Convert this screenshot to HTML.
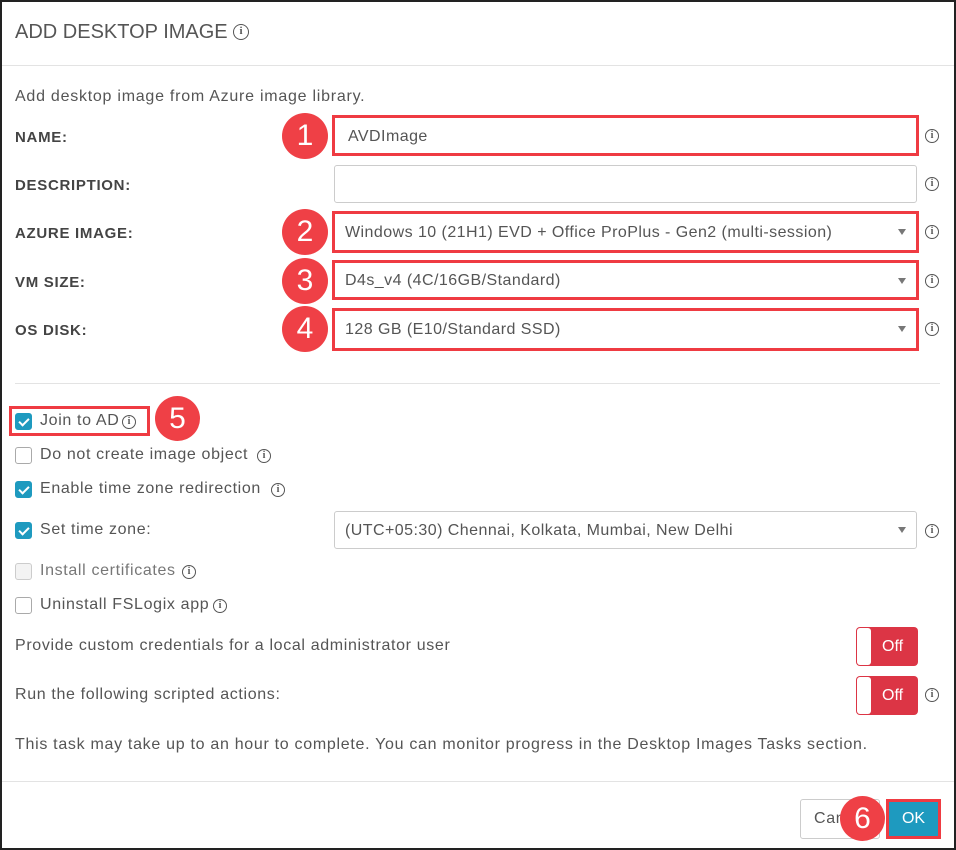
<!DOCTYPE html>
<html><head><style>
*{box-sizing:border-box;margin:0;padding:0}
body{width:956px;height:850px;background:#fff;font-family:"Liberation Sans",sans-serif;color:#555;position:relative;overflow:hidden;letter-spacing:0.65px}
.frame{position:absolute;left:0;top:0;width:956px;height:850px;border:2px solid #222}
.abs{position:absolute}
.lbl{position:absolute;left:15px;font-weight:bold;font-size:15px;color:#444;letter-spacing:0.7px}
.inp{position:absolute;left:334px;width:583px;height:38px;border:1px solid #ccc;border-radius:3px;font-size:16px;color:#555;padding:0 10px;line-height:38px;letter-spacing:0.45px}
.red{border:3px solid #ef3b42;border-radius:0}
.arrow{position:absolute;right:10px;top:15px;width:0;height:0;border-left:4px solid transparent;border-right:4px solid transparent;border-top:6px solid #777}
.num{position:absolute;width:46px;height:46px;border-radius:50%;background:#ef4046;color:#fff;font-size:30px;text-align:center;line-height:46px;letter-spacing:0}
.info{position:absolute;width:14px;height:14px;border:1.5px solid #555;border-radius:50%;font-size:10px;font-weight:bold;text-align:center;line-height:11px;color:#555;font-family:"Liberation Serif",serif;letter-spacing:0}
.cb{position:absolute;left:15px;width:17px;height:17px;border:1px solid #aaa;border-radius:3px;background:#fff}
.cb.on{background:#1e9abf;border-color:#1e9abf}
.cb.on::after{content:"";position:absolute;left:5px;top:2px;width:4px;height:8px;border:solid #fff;border-width:0 2px 2px 0;transform:rotate(45deg)}
.ct{position:absolute;left:40px;font-size:16px;color:#555}
.tog{position:absolute;left:856px;width:62px;height:39px;background:#dc3545;border-radius:4px;color:#fff;font-size:16px;line-height:39px;padding-left:26px;letter-spacing:0}
.tog::before{content:"";position:absolute;left:1px;top:1px;width:14px;height:37px;background:#fff;border-radius:3px}
</style></head><body>
<div class="frame"></div>
<div class="abs" style="left:15px;top:21px;font-size:20px;color:#555;letter-spacing:0">ADD DESKTOP IMAGE</div>
<div class="info" style="left:233px;top:24px;width:16px;height:16px;line-height:13px;font-size:11px">i</div>
<div class="abs" style="left:2px;top:65px;width:952px;height:1px;background:#e3e3e3"></div>
<div class="abs" style="left:15px;top:88px;font-size:16px;letter-spacing:0.75px">Add desktop image from Azure image library.</div>

<div class="lbl" style="top:129px">NAME:</div>
<div class="inp red" style="top:115px;left:332px;width:587px;height:41px;padding-left:13px;line-height:37px">AVDImage</div>
<div class="num" style="left:282px;top:113px">1</div>
<div class="info" style="left:925px;top:129px">i</div>

<div class="lbl" style="top:177px">DESCRIPTION:</div>
<div class="inp" style="top:165px"></div>
<div class="info" style="left:925px;top:177px">i</div>

<div class="lbl" style="top:225px">AZURE IMAGE:</div>
<div class="inp red" style="top:211px;left:332px;width:587px;height:42px">Windows 10 (21H1) EVD + Office ProPlus - Gen2 (multi-session)<div class="arrow"></div></div>
<div class="num" style="left:282px;top:209px">2</div>
<div class="info" style="left:925px;top:225px">i</div>

<div class="lbl" style="top:274px">VM SIZE:</div>
<div class="inp red" style="top:260px;left:332px;width:587px;height:40px;line-height:36px">D4s_v4 (4C/16GB/Standard)<div class="arrow"></div></div>
<div class="num" style="left:282px;top:258px">3</div>
<div class="info" style="left:925px;top:274px">i</div>

<div class="lbl" style="top:322px">OS DISK:</div>
<div class="inp red" style="top:308px;left:332px;width:587px;height:43px">128 GB (E10/Standard SSD)<div class="arrow"></div></div>
<div class="num" style="left:282px;top:306px">4</div>
<div class="info" style="left:925px;top:322px">i</div>

<div class="abs" style="left:15px;top:383px;width:925px;height:1px;background:#e3e3e3"></div>

<div class="abs" style="left:9px;top:406px;width:141px;height:30px;border:3px solid #ef3b42"></div>
<div class="cb on" style="top:413px"></div><div class="ct" style="top:412px">Join to AD</div><div class="info" style="left:122px;top:415px">i</div>
<div class="num" style="left:155px;top:396px;width:45px;height:45px;line-height:45px">5</div>

<div class="cb" style="top:447px"></div><div class="ct" style="top:446px">Do not create image object</div><div class="info" style="left:257px;top:449px">i</div>
<div class="cb on" style="top:481px"></div><div class="ct" style="top:480px">Enable time zone redirection</div><div class="info" style="left:271px;top:483px">i</div>
<div class="cb on" style="top:522px"></div><div class="ct" style="top:521px">Set time zone:</div>
<div class="inp" style="top:511px">(UTC+05:30) Chennai, Kolkata, Mumbai, New Delhi<div class="arrow"></div></div>
<div class="info" style="left:925px;top:524px">i</div>
<div class="cb" style="top:563px;background:#f3f3f3;border-color:#ccc"></div><div class="ct" style="top:562px;color:#777">Install certificates</div><div class="info" style="left:182px;top:565px">i</div>
<div class="cb" style="top:597px"></div><div class="ct" style="top:596px">Uninstall FSLogix app</div><div class="info" style="left:213px;top:599px">i</div>

<div class="abs" style="left:15px;top:637px;font-size:16px">Provide custom credentials for a local administrator user</div>
<div class="tog" style="top:627px">Off</div>
<div class="abs" style="left:15px;top:686px;font-size:16px">Run the following scripted actions:</div>
<div class="tog" style="top:676px">Off</div>
<div class="info" style="left:925px;top:688px">i</div>
<div class="abs" style="left:15px;top:736px;font-size:16px;letter-spacing:0.7px">This task may take up to an hour to complete. You can monitor progress in the Desktop Images Tasks section.</div>

<div class="abs" style="left:2px;top:781px;width:952px;height:1px;background:#e3e3e3"></div>
<div class="abs" style="left:800px;top:799px;width:80px;height:40px;border:1px solid #ccc;border-radius:3px;font-size:16px;line-height:38px;padding-left:13px">Cancel</div>
<div class="num" style="left:840px;top:796px;width:45px;height:45px;line-height:45px">6</div>
<div class="abs" style="left:886px;top:799px;width:55px;height:40px;border:3px solid #ef3b42;background:#1e9abf;color:#fff;font-size:16px;text-align:center;line-height:34px;letter-spacing:0">OK</div>
</body></html>
